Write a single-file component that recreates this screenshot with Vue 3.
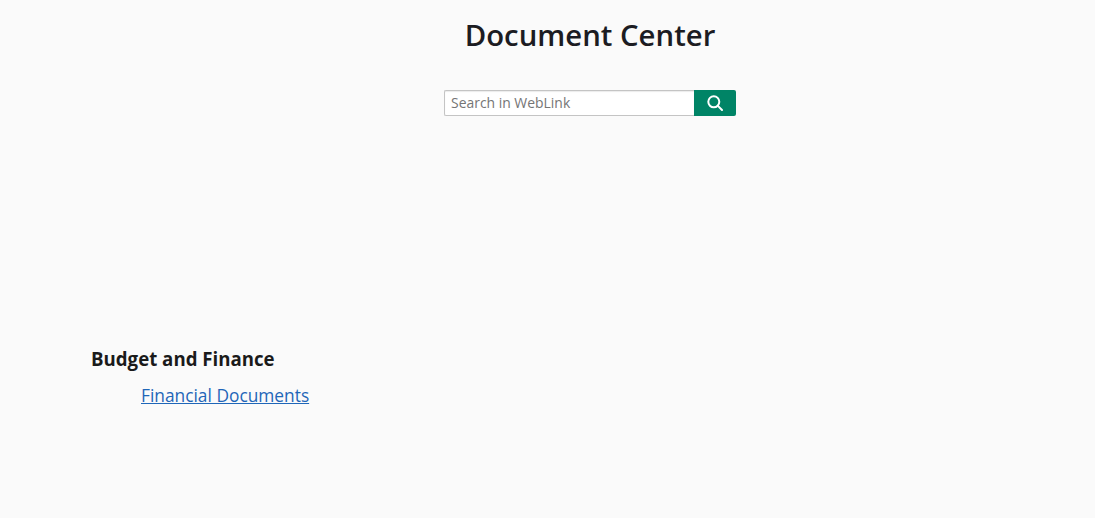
<script setup>
</script>

<template>
  <div class="page">
    <h1 class="title">Document Center</h1>
    <form class="search" @submit.prevent>
      <input class="input" type="text" placeholder="Search in WebLink" />
      <button class="btn" type="submit" aria-label="Search">
        <svg width="16" height="16" viewBox="0 0 16 16" fill="none" stroke="#fff" stroke-width="2" stroke-linecap="round">
          <circle cx="6.8" cy="6.8" r="5.5" />
          <path d="M10.9 10.9L15 15" />
        </svg>
      </button>
    </form>
    <section class="section">
      <h2 class="heading">Budget and Finance</h2>
      <a class="link" href="#">Financial Documents</a>
    </section>
  </div>
</template>

<style>
html, body { margin: 0; background: #fafafa; }
</style>

<style scoped>
.page {
  height: 518px;
  box-sizing: border-box;
  background: #fafafa;
  font-family: "Open Sans", sans-serif;
  color: #1a1a1a;
  padding-top: 15px;
  overflow: hidden;
}
.title {
  margin: 0;
  text-align: center;
  font-size: 29.33px;
  line-height: 40px;
  font-weight: 600;
  color: #1c1c22;
  padding-left: 85px;
}
.search {
  display: flex;
  width: 292px;
  height: 26px;
  margin: 35px 0 0 444px;
}
.input {
  width: 250px;
  height: 26px;
  box-sizing: border-box;
  border: 1px solid #c4c4c4;
  border-right: none;
  border-radius: 2px 0 0 2px;
  background: #fff;
  box-shadow: inset 0 1px 1px rgba(0, 0, 0, 0.08);
  padding: 0 6px 2px;
  font: 13.93px "Open Sans", sans-serif;
  outline: none;
}
.input::placeholder { color: #757575; opacity: 1; }
.btn {
  width: 42px;
  height: 26px;
  border: none;
  padding: 0;
  background: #008466;
  border-radius: 0 2px 2px 0;
  display: flex;
  align-items: center;
  justify-content: center;
}
.section {
  margin: 230px 0 0 91px;
}
.heading {
  margin: 0;
  font-size: 18.67px;
  line-height: 26px;
  font-weight: 700;
  color: #1a1a1a;
}
.link {
  display: inline-block;
  margin: 12px 0 0 50px;
  font-size: 17.33px;
  line-height: 23px;
  color: #1f66b8;
  text-decoration: underline;
}
</style>
